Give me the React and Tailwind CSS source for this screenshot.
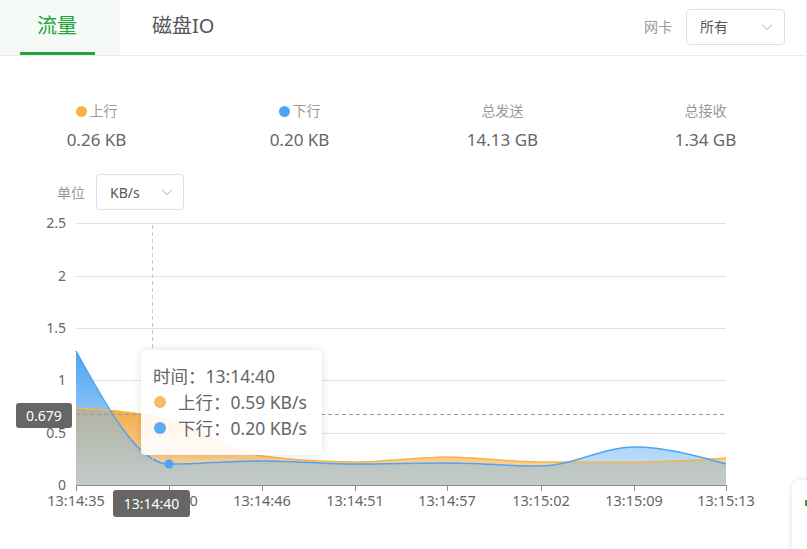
import React from 'react';

// network traffic panel: tabs, totals, unit picker and area chart

const FONT = { fontFamily: '"Noto Sans", "Noto Sans CJK SC", sans-serif' };

const up = [[76, 409], [169, 421], [262, 457], [355, 463], [447, 458], [541, 463], [634, 463], [726, 459]];
const down = [[76, 352], [169, 465], [262, 462], [355, 465], [447, 464], [541, 467], [634, 448], [726, 465]];

const yTicks = [['2.5', 224], ['2', 277], ['1.5', 329], ['1', 381], ['0.5', 434], ['0', 486]];
const xTicks = [
  ['13:14:35', 76], ['13:14:40', 169], ['13:14:46', 262], ['13:14:51', 355],
  ['13:14:57', 447], ['13:15:02', 541], ['13:15:09', 634], ['13:15:13', 726],
];

const sign = (v) => (v < 0 ? -1 : 1);

// monotone cubic, same idea as d3's curveMonotoneX
function smoothPath(pts) {
  const n = pts.length;
  const t = new Array(n).fill(0);
  for (let i = 1; i < n - 1; i++) {
    const [x0, y0] = pts[i - 1];
    const [x1, y1] = pts[i];
    const [x2, y2] = pts[i + 1];
    const h0 = x1 - x0, h1 = x2 - x1;
    const s0 = (y1 - y0) / h0, s1 = (y2 - y1) / h1;
    const p = (s0 * h1 + s1 * h0) / (h0 + h1);
    t[i] = (sign(s0) + sign(s1)) * Math.min(Math.abs(s0), Math.abs(s1), 0.5 * Math.abs(p)) || 0;
  }
  const end = (a, b, tt) => (3 * (b[1] - a[1]) / (b[0] - a[0]) - tt) / 2;
  t[0] = end(pts[0], pts[1], t[1]);
  t[n - 1] = end(pts[n - 2], pts[n - 1], t[n - 2]);
  let d = `M${pts[0][0]},${pts[0][1]}`;
  for (let i = 0; i < n - 1; i++) {
    const [x0, y0] = pts[i];
    const [x1, y1] = pts[i + 1];
    const dx = (x1 - x0) / 3;
    d += ` C${x0 + dx},${y0 + dx * t[i]} ${x1 - dx},${y1 - dx * t[i + 1]} ${x1},${y1}`;
  }
  return d;
}

const upLine = smoothPath(up);
const downLine = smoothPath(down);
const upArea = `${upLine} L726,486 L76,486 Z`;
const downArea = `${downLine} L726,486 L76,486 Z`;

const Chevron = () => (
  <svg className="w-[14px] h-[14px] text-[#c0c4cc]" viewBox="0 0 16 16" fill="none" stroke="currentColor" strokeWidth={1.2}>
    <path d="M2.5 5.5 8 11l5.5-5.5" />
  </svg>
);

const Stat = ({ dot, label, value }) => (
  <div className="flex flex-col items-center">
    <div className="flex items-center gap-[3px] text-[14px] leading-[20px] text-[#999]">
      {dot && <span className={`w-[11px] h-[11px] rounded-full ${dot}`} />}
      {label}
    </div>
    <div className="mt-[6px] text-[17px] leading-[26px] text-[#666]">{value}</div>
  </div>
);

const Chart = () => (
  <svg width="807" height="314" viewBox="0 211 807 314" className="block" style={FONT}>
    <defs>
      <linearGradient id="gUp" x1="0" y1="400" x2="0" y2="486" gradientUnits="userSpaceOnUse">
        <stop offset="0" stopColor="#f5a63e" />
        <stop offset="1" stopColor="#fbdcae" />
      </linearGradient>
      <linearGradient id="gDown" x1="0" y1="350" x2="0" y2="486" gradientUnits="userSpaceOnUse">
        <stop offset="0" stopColor="#4aa2f4" />
        <stop offset="1" stopColor="#d3e8fb" />
      </linearGradient>
      <linearGradient id="gMix" x1="0" y1="405" x2="0" y2="486" gradientUnits="userSpaceOnUse">
        <stop offset="0" stopColor="#aeb19f" />
        <stop offset="1" stopColor="#c3cccb" />
      </linearGradient>
      <clipPath id="clipUp">
        <path d={upArea} />
      </clipPath>
    </defs>

    {yTicks.slice(0, 5).map(([, y]) => (
      <line key={y} x1="76" x2="726" y1={y + 0.5} y2={y + 0.5} stroke="#e3e3e3" />
    ))}
    {yTicks.map(([l, y]) => (
      <text key={l} x="66" y={y + 5} textAnchor="end" fontSize="14" fill="#666">{l}</text>
    ))}

    <path d={upArea} fill="url(#gUp)" />
    <path d={downArea} fill="url(#gDown)" />
    <path d={downArea} fill="url(#gMix)" clipPath="url(#clipUp)" />
    <path d={upLine} fill="none" stroke="#f6b54a" strokeWidth="1.5" />
    <path d={downLine} fill="none" stroke="#4ea5f5" strokeWidth="1.5" />

    <line x1="76" x2="726" y1="486.5" y2="486.5" stroke="#8c8c8c" />
    {xTicks.map(([l, x]) => (
      <g key={l}>
        <line x1={x + 0.5} x2={x + 0.5} y1="486" y2="492" stroke="#8c8c8c" />
        <text x={x} y="507" textAnchor="middle" fontSize="14.5" fill="#666">{l}</text>
      </g>
    ))}

    <line x1="152.5" x2="152.5" y1="226" y2="486" stroke="#c8c8d0" strokeDasharray="4 3" />
    <line x1="76" x2="726" y1="415.5" y2="415.5" stroke="#9a9a9a" strokeDasharray="4 3" />
    <circle cx="169" cy="465" r="4.5" fill="#4ea5f5" />
  </svg>
);

export default function App() {
  return (
    <div className="relative w-[807px] h-[549px] bg-white overflow-hidden" style={FONT}>
      <div className="w-[807px] border-r border-[#ececec]">
        {/* tabs */}
        <div className="h-[56px] flex items-stretch justify-between border-b border-[#ebebeb]">
          <div className="flex items-stretch">
            <div className="relative w-[120px] bg-[#f6faf7] flex items-center justify-center text-[20px] text-[#20a53a] pr-[6px] pb-[4px]">
              流量
              <span className="absolute left-[20px] bottom-0 w-[75px] h-[3px] bg-[#20a53a]" />
            </div>
            <div className="flex items-center pl-[32px] pb-[4px] text-[20px] text-[#555]">磁盘IO</div>
          </div>
          <div className="flex items-center pr-[21px] pb-[2px]">
            <span className="text-[14px] text-[#999] mr-[14px]">网卡</span>
            <div className="w-[99px] h-[36px] border border-[#dcdfe6] rounded-[4px] flex items-center justify-between pl-[13px] pr-[10px] text-[14px] text-[#555]">
              所有
              <Chevron />
            </div>
          </div>
        </div>

        {/* totals */}
        <div className="grid grid-cols-4 w-[812px] -ml-[5px] pt-[45px]">
          <Stat dot="bg-[#f7b44a]" label="上行" value="0.26 KB" />
          <Stat dot="bg-[#4ea5f5]" label="下行" value="0.20 KB" />
          <Stat label="总发送" value="14.13 GB" />
          <Stat label="总接收" value="1.34 GB" />
        </div>

        {/* unit */}
        <div className="flex items-center mt-[21px] pl-[57px]">
          <span className="text-[14px] text-[#999] mr-[11px]">单位</span>
          <div className="w-[88px] h-[36px] border border-[#dcdfe6] rounded-[4px] flex items-center justify-between pl-[13px] pr-[9px] text-[14px] text-[#555]">
            KB/s
            <Chevron />
          </div>
        </div>

        <Chart />
      </div>

      {/* overlays */}
      <div className="absolute left-[16px] top-[403px] w-[56px] h-[25px] rounded-[3px] bg-[#666] text-white text-[14px] flex items-center justify-center">
        0.679
      </div>
      <div className="absolute left-[113px] top-[490px] w-[77px] h-[27px] rounded-[3px] bg-[#666] text-white text-[14px] flex items-center justify-center">
        13:14:40
      </div>
      <div className="absolute left-[141px] top-[350px] w-[181px] h-[105px] rounded-[4px] bg-white/90 shadow-[0_0_10px_rgba(0,0,0,0.12)] pl-[12px] pt-[13px] text-[17.5px] leading-[26px] text-[#666]">
        <div>时间：13:14:40</div>
        <div className="flex items-center">
          <span className="w-[12px] h-[12px] rounded-full bg-[#f7bd62] ml-[1px] mr-[12px]" />
          上行：0.59 KB/s
        </div>
        <div className="flex items-center">
          <span className="w-[12px] h-[12px] rounded-full bg-[#5aa9f2] ml-[1px] mr-[12px]" />
          下行：0.20 KB/s
        </div>
      </div>

      {/* corner card */}
      <div className="absolute left-[792px] top-[480px] w-[40px] h-[90px] bg-white rounded-tl-[8px] shadow-[0_0_6px_rgba(0,0,0,0.12)]">
        <span className="absolute left-[13px] top-[20px] w-[2px] h-[6px] bg-[#20a53a]" />
      </div>
    </div>
  );
}
